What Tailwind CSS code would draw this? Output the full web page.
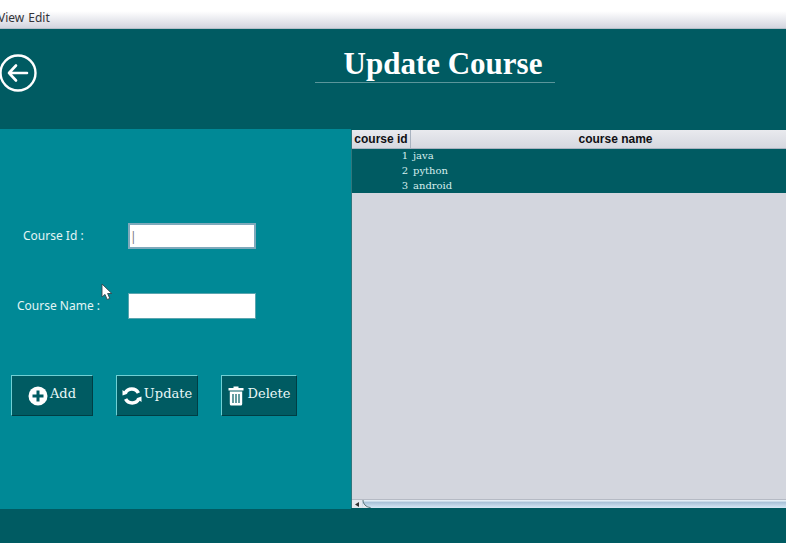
<!DOCTYPE html>
<html lang="en">
<head>
<meta charset="utf-8">
<meta name="viewport" content="width=device-width, initial-scale=1">
<title>Update Course</title>
<script src="https://cdn.jsdelivr.net/npm/@tailwindcss/browser@4"></script>
</head>
<body class="flex min-h-screen flex-col overflow-x-hidden bg-[#005b62] font-['Noto_Sans',sans-serif]">
  <nav class="flex h-[29px] shrink-0 flex-col border-b border-[#b4bec8] bg-linear-to-b from-white from-40% to-[#d3d5df]" aria-label="Menu">
    <div class="h-px w-3 bg-[#b9b5bd]"></div>
    <div class="-ml-0.5 flex gap-1 pt-2 text-xs leading-5 text-[#333338]">
      <button type="button">View</button>
      <button type="button">Edit</button>
    </div>
  </nav>

  <header class="relative flex h-[100px] shrink-0 justify-center">
    <a href="#" aria-label="Back" class="absolute -left-px top-6">
      <svg class="size-10" viewBox="0 0 40 40" fill="none" stroke="#fff" stroke-linecap="round" stroke-linejoin="round">
        <circle cx="19" cy="20" r="17.5" stroke-width="2.4"/>
        <path d="M28 20H10M17 12.500L10 20l7 7.500" stroke-width="2.6"/>
      </svg>
    </a>
    <div class="ml-[84px] mt-4 h-[38px] w-[240px] border-b border-[#5b969b]">
      <h1 class="pl-4 text-center font-['Palatino_Linotype','Liberation_Serif',serif] text-[31px] font-bold leading-[38px] whitespace-nowrap text-white">Update Course</h1>
    </div>
  </header>

  <main class="flex min-h-[380px] flex-1">
    <form class="relative flex w-[351px] shrink-0 flex-col bg-[#008996] pt-[94px]">
      <div class="flex h-[26px] items-center">
        <label for="cid" class="w-[128px] pl-[23px] text-xs text-[#e3f5f5]">Course Id :</label>
        <input id="cid" type="text" value="|" class="h-[26px] w-[128px] border-2 border-[#7fa9bb] bg-white text-xs text-[#777] outline-none">
      </div>
      <div class="mt-11 flex h-[26px] items-center">
        <label for="cname" class="w-[128px] pl-[17px] text-xs text-[#e3f5f5]">Course Name :</label>
        <input id="cname" type="text" class="h-[26px] w-[128px] border border-[#5aa5af] bg-white pl-1 text-xs outline-none">
      </div>
      <div class="mt-14 flex h-[41px] gap-[23px] pl-[11px] font-['Sitka_Text','DejaVu_Serif',serif] text-[13px] text-[#e9f8f8]">
        <button type="button" class="flex w-[82px] items-center justify-center gap-0.5 border border-t-[#6fd0d4] border-r-[#003e44] border-b-[#003e44] border-l-[#6fd0d4] bg-[#005b62]">
          <svg class="size-5 shrink-0" viewBox="0 0 20 20"><circle cx="10" cy="10" r="9.500" fill="#fff"/><path d="M10 4.500v11M4.500 10h11" stroke="#005b62" stroke-width="3"/></svg>
          <span class="pb-1">Add</span>
        </button>
        <button type="button" class="flex w-[82px] items-center justify-center gap-0.5 border border-t-[#6fd0d4] border-r-[#003e44] border-b-[#003e44] border-l-[#6fd0d4] bg-[#005b62]">
          <svg class="size-5 shrink-0" viewBox="0 0 20 20"><path d="M3.200 7a7.500 7.500 0 0 1 13.200 0M16.800 13a7.500 7.500 0 0 1-13.200 0" fill="none" stroke="#fff" stroke-width="3.600"/><path d="M0.500 4v5.500l5-1.800zM19.500 16v-5.500l-5 1.800z" fill="#fff"/></svg>
          <span class="pb-1">Update</span>
        </button>
        <button type="button" class="flex w-[76px] items-center justify-center gap-1 border border-t-[#6fd0d4] border-r-[#003e44] border-b-[#003e44] border-l-[#6fd0d4] bg-[#005b62]">
          <svg class="h-5 w-4 shrink-0" viewBox="0 0 16 20"><path d="M5.500 0.500h5v1.500H15.500v2.500H0.500V2H5.500zM1.800 5.500h12.400V18a1.500 1.500 0 0 1-1.500 1.500H3.300A1.500 1.500 0 0 1 1.800 18z" fill="#fff"/><path d="M5 8v9M8 8v9M11 8v9" stroke="#005b62" stroke-width="1.200"/></svg>
          <span class="pb-1">Delete</span>
        </button>
      </div>
      <svg class="absolute left-[101px] top-[154px] h-[18px] w-3" viewBox="0 0 12 18"><path d="M1 1v13l3-2.600L6.200 16.500l2.600-1.100L6.600 10.500H10.800z" fill="#fff" stroke="#35464c" stroke-width="0.900"/></svg>
    </form>

    <section class="mt-px mb-px flex min-w-0 flex-1 flex-col overflow-hidden border-l border-[#2f777d] bg-[#d3d6de]">
      <table class="w-[calc(100%+34px)] table-fixed border-separate border-spacing-0">
        <thead>
          <tr class="bg-linear-to-b from-[#e9eaee] to-[#d5d7df] font-['Liberation_Sans',Arial,sans-serif] text-[11px] text-[#101014]">
            <th class="w-[59px] border-r border-b border-[#a9b3c0] p-0 text-xs leading-[18px] whitespace-nowrap">course id</th>
            <th class="border-b border-[#a9b3c0] p-0 text-xs leading-[18px]">course name</th>
          </tr>
        </thead>
        <tbody class="bg-[#005b62] font-['Sitka_Text','DejaVu_Serif',serif] text-[10px] leading-[14px] text-[#d5eeee]">
          <tr><td class="p-0 pr-[3px] text-right">1</td><td class="p-0 pl-0.5">java</td></tr>
          <tr><td class="p-0 pt-px pr-[3px] text-right">2</td><td class="p-0 pt-px pl-0.5">python</td></tr>
          <tr><td class="p-0 pt-px pr-[3px] text-right">3</td><td class="p-0 pt-px pl-0.5">android</td></tr>
        </tbody>
      </table>
      <div class="mt-auto flex h-[9px] border-t border-[#b5bac4] bg-[#e4e8ee]">
        <button type="button" aria-label="Scroll left" class="flex w-[10px] items-center justify-center">
          <svg class="h-[5px] w-1" viewBox="0 0 4 5"><path d="M4 0v5L0 2.500z" fill="#333"/></svg>
        </button>
        <div class="flex flex-1 bg-linear-to-b from-[#e2edf5] from-10% via-[#a9c3d9] via-30% to-[#d6e8f6]">
          <svg class="h-2 w-[10px]" viewBox="0 0 10 9"><path d="M0 0c0 4 3 8 9 9H0z" fill="#e4e8ee"/><path d="M0.500 0c0 4 3 8 8.500 8.500" fill="none" stroke="#4d6666"/></svg>
        </div>
      </div>
    </section>
  </main>
  <footer class="h-[34px] shrink-0"></footer>
</body>
</html>
